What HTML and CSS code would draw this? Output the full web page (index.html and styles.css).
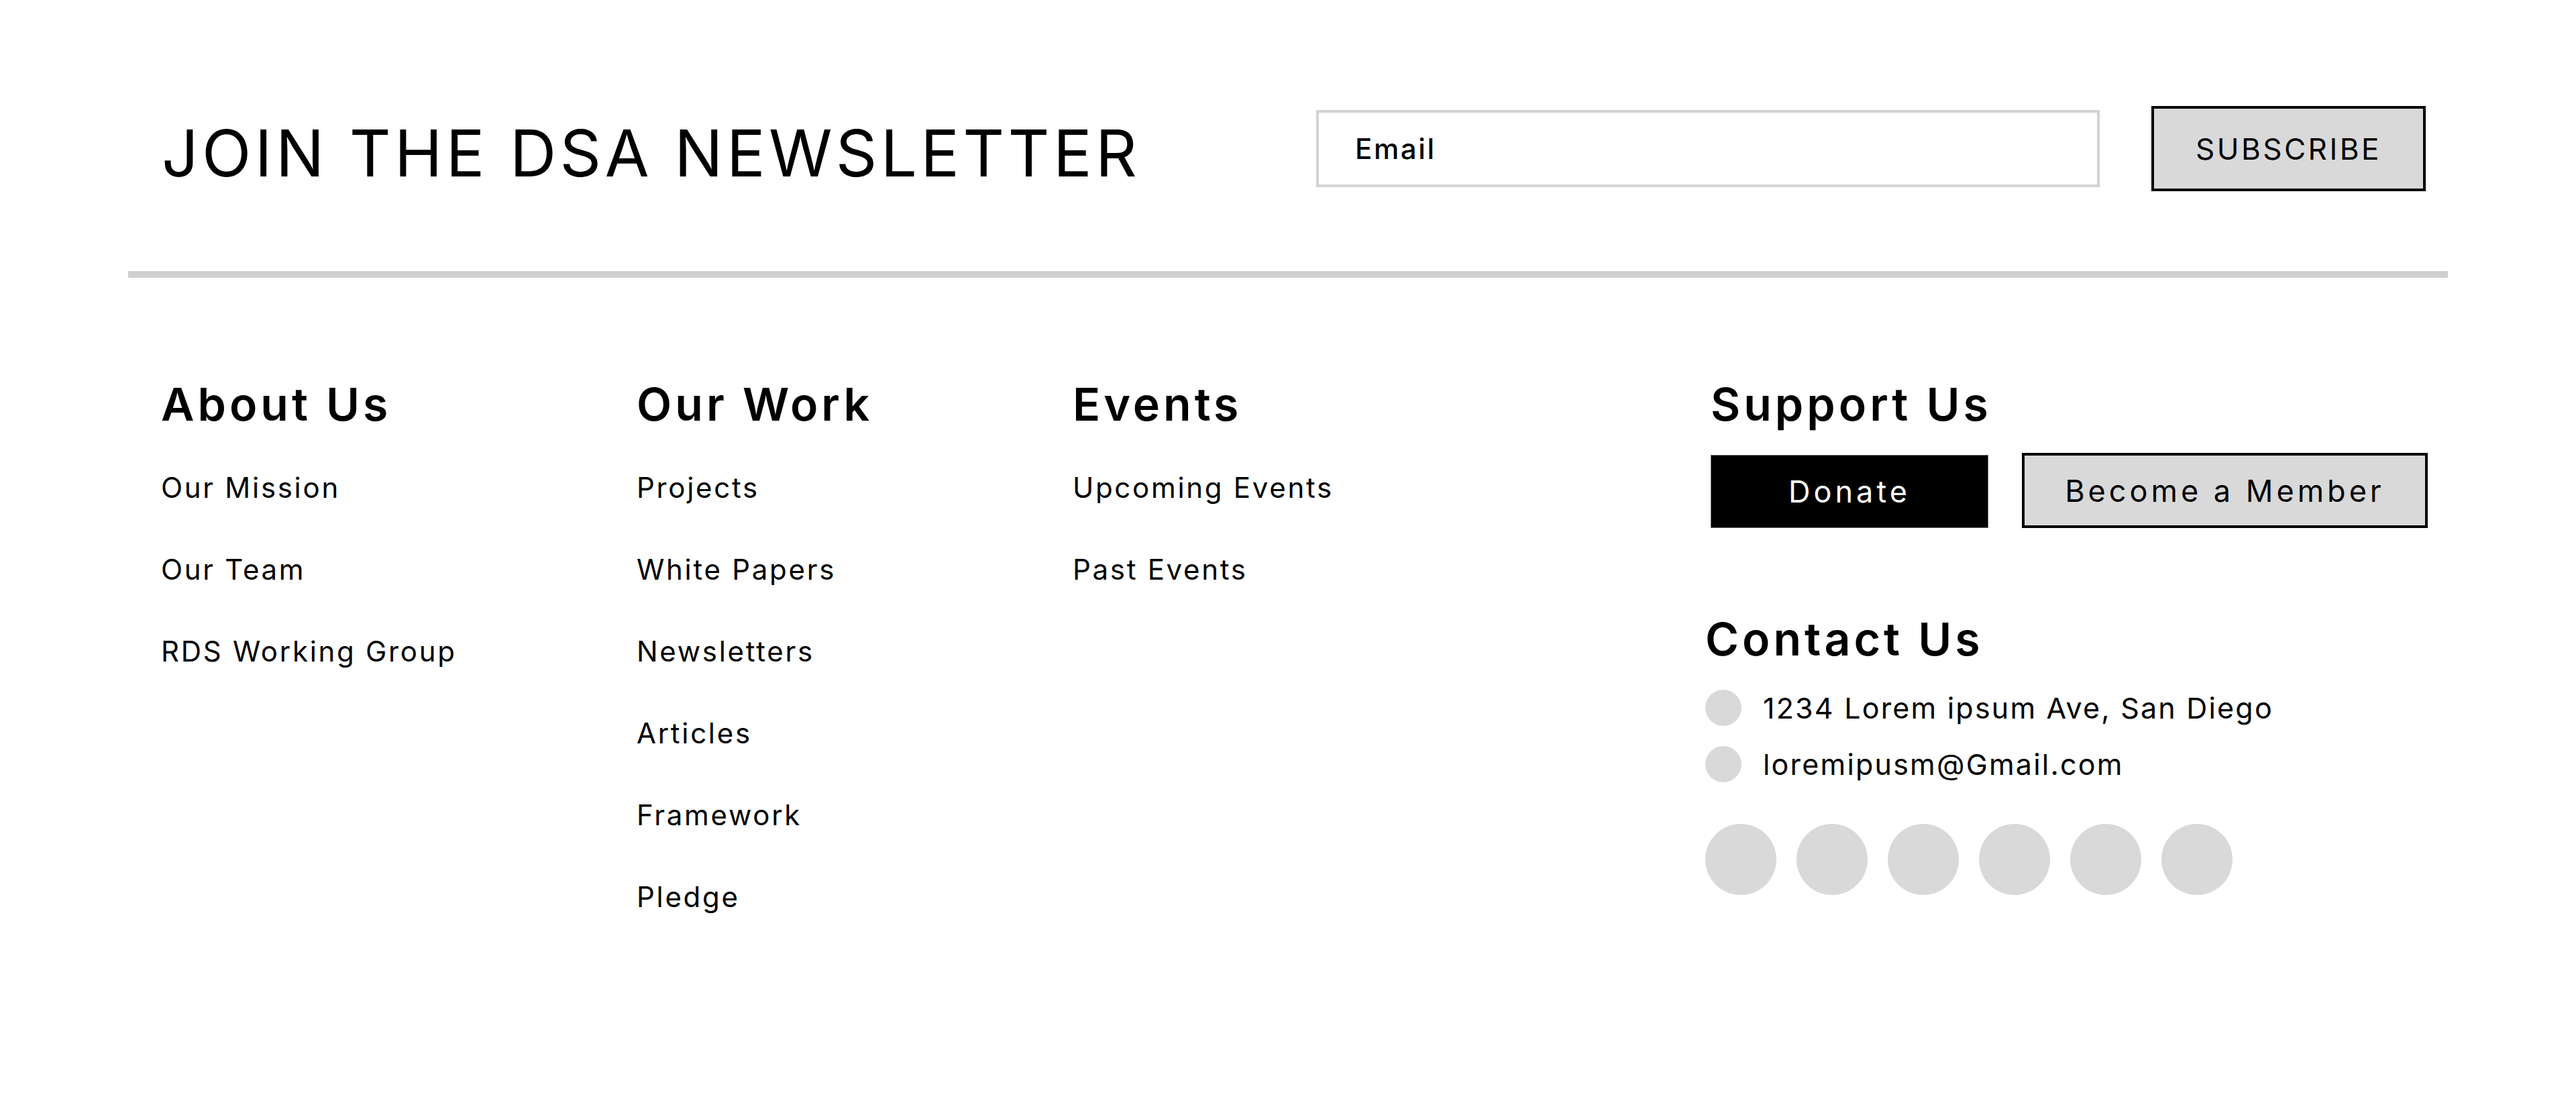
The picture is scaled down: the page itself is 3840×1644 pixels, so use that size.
FILE: index.html
```html
<!DOCTYPE html>
<html lang="en">
<head>
<meta charset="utf-8">
<title>DSA Footer</title>
<link rel="stylesheet" href="styles.css">
</head>
<body>
<footer class="site-footer">
  <section class="newsletter">
    <h2 class="newsletter-title">JOIN THE DSA NEWSLETTER</h2>
    <form class="newsletter-form">
      <input class="email-input" type="email" placeholder="Email">
      <button class="subscribe-btn" type="button">SUBSCRIBE</button>
    </form>
  </section>
  <hr class="divider">
  <div class="footer-columns">
    <nav class="col">
      <h3 class="col-title">About Us</h3>
      <ul class="link-list">
        <li>Our Mission</li>
        <li>Our Team</li>
        <li>RDS Working Group</li>
      </ul>
    </nav>
    <nav class="col">
      <h3 class="col-title">Our Work</h3>
      <ul class="link-list">
        <li>Projects</li>
        <li>White Papers</li>
        <li>Newsletters</li>
        <li>Articles</li>
        <li>Framework</li>
        <li>Pledge</li>
      </ul>
    </nav>
    <nav class="col">
      <h3 class="col-title">Events</h3>
      <ul class="link-list">
        <li>Upcoming Events</li>
        <li>Past Events</li>
      </ul>
    </nav>
    <div class="col col-support">
      <h3 class="col-title">Support Us</h3>
      <div class="support-actions">
        <button class="btn-donate" type="button">Donate</button>
        <button class="btn-member" type="button">Become a Member</button>
      </div>
      <div class="contact">
        <h3 class="col-title">Contact Us</h3>
        <ul class="contact-list">
          <li class="contact-item"><span class="contact-icon"></span><span>1234 Lorem ipsum Ave, San Diego</span></li>
          <li class="contact-item"><span class="contact-icon"></span><span>loremipusm@Gmail.com</span></li>
        </ul>
        <div class="socials">
          <span class="social-dot"></span>
          <span class="social-dot"></span>
          <span class="social-dot"></span>
          <span class="social-dot"></span>
          <span class="social-dot"></span>
          <span class="social-dot"></span>
        </div>
      </div>
    </div>
  </div>
</footer>
</body>
</html>
```
FILE: styles.css
```css
* { box-sizing: border-box; }
html, body {
  margin: 0;
  padding: 0;
  background: #fff;
  color: #000;
  font-family: "Inter", "Open Sans", sans-serif;
}
body { width: 3840px; height: 1644px; overflow: hidden; }

.site-footer {
  margin-left: 191px;
  width: 3458px;
}

.newsletter {
  display: flex;
  align-items: center;
  padding: 158px 33px 0 50px;
}
.newsletter-title {
  margin: 0;
  padding-top: 13px;
  font-size: 96px;
  line-height: 1;
  font-weight: 400;
  letter-spacing: 5.3px;
  white-space: nowrap;
}
.newsletter-form {
  margin: 0 0 0 auto;
  display: flex;
  align-items: center;
  gap: 77px;
}
.email-input {
  width: 1168px;
  height: 115px;
  border: 4px solid #d3d3d3;
  padding: 0 0 0 54px;
  font-family: inherit;
  font-size: 42px;
  font-weight: 500;
  letter-spacing: 2.6px;
  color: #000;
  background: #fff;
  outline: none;
}
.email-input::placeholder { color: #000; opacity: 1; }
.subscribe-btn {
  width: 409px;
  height: 127px;
  border: 4px solid #000;
  background: #d9d9d9;
  font-family: inherit;
  font-size: 44px;
  font-weight: 400;
  letter-spacing: 3.5px;
  color: #000;
  padding: 0;
}

.divider {
  margin: 119px 0 0;
  height: 10px;
  border: 0;
  background: #d0d0d0;
}

.footer-columns {
  display: grid;
  grid-template-columns: 709px 650px 951px 1fr;
  padding: 154px 0 0 49px;
}
.col-title {
  margin: 0;
  font-size: 68px;
  line-height: 1;
  font-weight: 600;
  letter-spacing: 5px;
  white-space: nowrap;
}
.link-list {
  list-style: none;
  margin: 70px 0 0;
  padding: 0;
  display: flex;
  flex-direction: column;
  gap: 80px;
  font-size: 42px;
  line-height: 1;
  font-weight: 400;
  letter-spacing: 2.7px;
  white-space: nowrap;
}

.support-actions {
  display: flex;
  align-items: flex-end;
  gap: 50px;
  margin-top: 39px;
}
.btn-donate {
  width: 414px;
  height: 109px;
  background: #000;
  color: #fff;
  border: 1px solid #666;
  font-family: inherit;
  font-size: 45px;
  letter-spacing: 5px;
  padding: 0;
}
.btn-member {
  width: 605px;
  height: 112px;
  background: #d9d9d9;
  color: #000;
  border: 4px solid #000;
  font-family: inherit;
  font-size: 45px;
  letter-spacing: 5px;
  padding: 0;
}

.contact {
  margin: 131px 0 0 -8px;
}
.contact-list {
  list-style: none;
  margin: 42px 0 0;
  padding: 0;
  display: flex;
  flex-direction: column;
  gap: 30px;
}
.contact-item {
  display: flex;
  align-items: center;
  gap: 32px;
  font-size: 43px;
  line-height: 1;
  letter-spacing: 2.2px;
  white-space: nowrap;
}
.contact-icon {
  width: 54px;
  height: 54px;
  border-radius: 50%;
  background: #d9d9d9;
  flex: none;
}
.socials {
  display: flex;
  gap: 30px;
  margin-top: 62px;
}
.social-dot {
  width: 106px;
  height: 106px;
  border-radius: 50%;
  background: #d9d9d9;
}
```
